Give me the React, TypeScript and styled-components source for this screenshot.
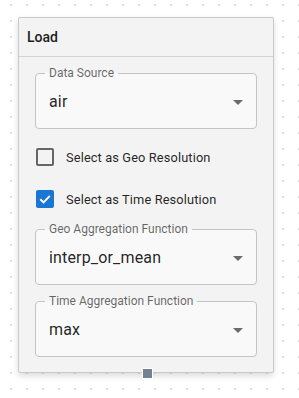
import React from "react";
import styled, { createGlobalStyle } from "styled-components";

const CARD_BG = "#f3f3f3";
const FIELD_BG = "#f9f9f9";

const Global = createGlobalStyle`
  html, body {
    margin: 0;
    padding: 0;
    height: 100%;
  }
  body {
    font-family: Roboto, "Liberation Sans", Arial, sans-serif;
    background-color: #ffffff;
    background-image: radial-gradient(circle at center, #dedede 0.9px, transparent 1.2px);
    background-size: 16px 16px;
    background-position: 3px -3px;
  }
  #root {
    padding: 17px 0 0 18px;
  }
`;

const Card = styled.div`
  position: relative;
  box-sizing: border-box;
  width: 256px;
  background: ${CARD_BG};
  border: 1px solid #c9c9c9;
  border-radius: 2px;
  box-shadow: 0 3px 6px rgba(0, 0, 0, 0.14);
`;

const Header = styled.div`
  display: flex;
  align-items: center;
  height: 38px;
  padding: 0 8px;
  border-bottom: 1px solid #d2d2d2;
  font-size: 14px;
  font-weight: 500;
  color: #1d1d1d;
`;

const Body = styled.div`
  display: flex;
  flex-direction: column;
  padding: 16px 16px 15px;
`;

const Field = styled.div<{ $mt?: number }>`
  position: relative;
  box-sizing: border-box;
  height: 56px;
  margin-top: ${(p) => p.$mt ?? 0}px;
  background: ${FIELD_BG};
  border: 1px solid #c4c4c4;
  border-radius: 4px;
  display: flex;
  align-items: center;
  justify-content: space-between;
  padding: 0 13px 0 13px;
`;

const FieldLabel = styled.span`
  position: absolute;
  top: -8px;
  left: 9px;
  padding: 0 4px;
  font-size: 12px;
  line-height: 14px;
  color: rgba(0, 0, 0, 0.6);
  background: linear-gradient(to bottom, ${CARD_BG} 50%, ${FIELD_BG} 50%);
`;

const Value = styled.span`
  font-size: 16px;
  color: rgba(0, 0, 0, 0.87);
  letter-spacing: 0.01em;
`;

const Arrow = styled.span`
  width: 0;
  height: 0;
  border-left: 5px solid transparent;
  border-right: 5px solid transparent;
  border-top: 5px solid #6b6b6b;
  margin-top: 2px;
`;

const CheckGroup = styled.div`
  display: flex;
  flex-direction: column;
  margin-top: 7px;
`;

const CheckRow = styled.label`
  display: flex;
  align-items: center;
  height: 42px;
  gap: 12px;
  padding-left: 1px;
  font-size: 12.8px;
  letter-spacing: 0.01em;
  color: rgba(0, 0, 0, 0.87);
`;

const Box = styled.span<{ $checked: boolean }>`
  box-sizing: border-box;
  width: 18px;
  height: 18px;
  border-radius: 2px;
  display: flex;
  align-items: center;
  justify-content: center;
  border: ${(p) => (p.$checked ? "none" : "2px solid #666666")};
  background: ${(p) => (p.$checked ? "#1976d2" : "transparent")};
`;

const Handle = styled.span`
  position: absolute;
  left: 123px;
  bottom: -7px;
  width: 9px;
  height: 9px;
  background: #738293;
  border: 1px solid #ffffff;
`;

function Select({ label, value, mt }: { label: string; value: string; mt?: number }) {
  return (
    <Field $mt={mt}>
      <FieldLabel>{label}</FieldLabel>
      <Value>{value}</Value>
      <Arrow />
    </Field>
  );
}

function Check({ label, checked }: { label: string; checked: boolean }) {
  return (
    <CheckRow>
      <Box $checked={checked}>
        {checked && (
          <svg width="14" height="14" viewBox="0 0 14 14">
            <path d="M2.3 7.2 L5.6 10.4 L11.8 3.9" fill="none" stroke="#fff" strokeWidth="2" />
          </svg>
        )}
      </Box>
      {label}
    </CheckRow>
  );
}

export default function App() {
  return (
    <>
      <Global />
      <Card>
        <Header>Load</Header>
        <Body>
          <Select label="Data Source" value="air" />
          <CheckGroup>
            <Check label="Select as Geo Resolution" checked={false} />
            <Check label="Select as Time Resolution" checked={true} />
          </CheckGroup>
          <Select label="Geo Aggregation Function" value="interp_or_mean" mt={9} />
          <Select label="Time Aggregation Function" value="max" mt={16} />
        </Body>
        <Handle />
      </Card>
    </>
  );
}
